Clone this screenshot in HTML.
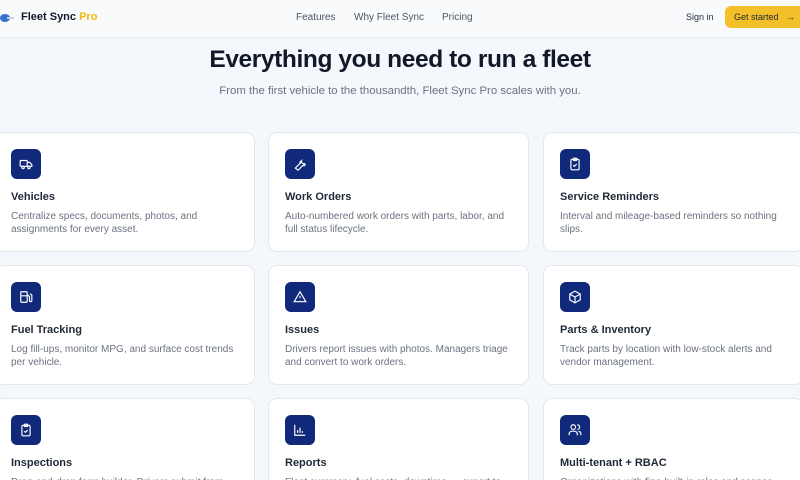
<!DOCTYPE html>
<html><head><style>
*{margin:0;padding:0;box-sizing:border-box}
html,body{width:800px;height:480px;overflow:hidden}
body{background:#f4f7fb;font-family:"Liberation Sans",sans-serif;position:relative}
.hdr{position:absolute;left:0;top:0;width:800px;height:38px;background:#f8fafc;border-bottom:1px solid #e5e9f0}
.logo{position:absolute;left:21px;top:11px;font-size:11px;font-weight:bold;color:#111827}
.logo span{color:#f0b90b}
.nav{position:absolute;top:12px;font-size:10px;color:#4b5563}
.btn{position:absolute;left:725px;top:6px;width:84px;height:22px;background:#f4c02a;border-radius:6px;font-size:9px;color:#1f2937;padding:6px 0 0 9px}
h1{position:absolute;left:0;width:800px;top:46px;text-align:center;font-size:24.5px;font-weight:bold;color:#111827;letter-spacing:-0.4px}
.sub{position:absolute;left:0;width:800px;top:85px;text-align:center;font-size:11.4px;color:#6b7280}
.card{position:absolute;width:261px;height:120px;background:#fff;border:1px solid #e3e7ee;border-radius:9px}
.ic{position:absolute;left:16px;top:16px;width:30px;height:30px;background:#10297a;border-radius:6px;display:flex;align-items:center;justify-content:center}
.t{position:absolute;left:16px;top:58px;font-size:11px;font-weight:bold;color:#1f2937}
.d{position:absolute;left:16px;top:77px;width:226px;font-size:10px;line-height:13px;color:#6b7280}
</style></head><body>
<div class="hdr">
<svg style="position:absolute;left:0;top:13px" width="14" height="10"><ellipse cx="5" cy="5" rx="5" ry="4" fill="#3b6fd0"/><rect x="7" y="4" width="7" height="2" fill="#c9d2e0"/></svg>
<div class="logo">Fleet Sync <span>Pro</span></div>
<div class="nav" style="left:296px">Features</div>
<div class="nav" style="left:354px">Why Fleet Sync</div>
<div class="nav" style="left:442px">Pricing</div>
<div class="nav" style="left:686px;color:#1f2937;font-size:9px;top:12px">Sign in</div>
<div class="btn">Get started &nbsp;&nbsp;→</div>
</div>
<h1>Everything you need to run a fleet</h1>
<div class="sub">From the first vehicle to the thousandth, Fleet Sync Pro scales with you.</div>

<div class="card" style="left:-6px;top:132px"><div class="ic"><svg width="14" height="14" viewBox="0 0 24 24" fill="none" stroke="#fff" stroke-width="2"><rect x="2" y="6" width="12" height="10" rx="1"/><path d="M14 9h4l4 4v3h-8"/><circle cx="7" cy="18" r="2"/><circle cx="17" cy="18" r="2"/></svg></div><div class="t">Vehicles</div><div class="d">Centralize specs, documents, photos, and assignments for every asset.</div></div>
<div class="card" style="left:268px;top:132px"><div class="ic"><svg width="14" height="14" viewBox="0 0 24 24" fill="none" stroke="#fff" stroke-width="2"><path d="M14.7 6.3a4 4 0 0 0 5 5L21 13l-2 2-1.3-1.3-9 9L4 19l9-9L11.7 8.7l3-2.4z"/></svg></div><div class="t">Work Orders</div><div class="d">Auto-numbered work orders with parts, labor, and full status lifecycle.</div></div>
<div class="card" style="left:543px;top:132px"><div class="ic"><svg width="14" height="14" viewBox="0 0 24 24" fill="none" stroke="#fff" stroke-width="2"><rect x="5" y="4" width="14" height="18" rx="2"/><rect x="9" y="2" width="6" height="4" rx="1"/><path d="M9 14l2 2 4-4"/></svg></div><div class="t">Service Reminders</div><div class="d">Interval and mileage-based reminders so nothing slips.</div></div>

<div class="card" style="left:-6px;top:265px"><div class="ic"><svg width="14" height="14" viewBox="0 0 24 24" fill="none" stroke="#fff" stroke-width="2"><rect x="3" y="3" width="11" height="18" rx="1"/><path d="M3 10h11M14 8l4 3v7a2 2 0 0 0 4 0V9l-3-3"/></svg></div><div class="t">Fuel Tracking</div><div class="d">Log fill-ups, monitor MPG, and surface cost trends per vehicle.</div></div>
<div class="card" style="left:268px;top:265px"><div class="ic"><svg width="14" height="14" viewBox="0 0 24 24" fill="none" stroke="#fff" stroke-width="2"><path d="M12 3L2 20h20L12 3zM12 10v4M12 17v.5"/></svg></div><div class="t">Issues</div><div class="d">Drivers report issues with photos. Managers triage and convert to work orders.</div></div>
<div class="card" style="left:543px;top:265px"><div class="ic"><svg width="14" height="14" viewBox="0 0 24 24" fill="none" stroke="#fff" stroke-width="2"><path d="M12 2l9 5v10l-9 5-9-5V7zM3 7l9 5 9-5M12 12v10"/></svg></div><div class="t">Parts &amp; Inventory</div><div class="d">Track parts by location with low-stock alerts and vendor management.</div></div>

<div class="card" style="left:-6px;top:398px"><div class="ic"><svg width="14" height="14" viewBox="0 0 24 24" fill="none" stroke="#fff" stroke-width="2"><rect x="5" y="4" width="14" height="18" rx="2"/><rect x="9" y="2" width="6" height="4" rx="1"/><path d="M9 14l2 2 4-4"/></svg></div><div class="t">Inspections</div><div class="d">Drag-and-drop form builder. Drivers submit from any device.</div></div>
<div class="card" style="left:268px;top:398px"><div class="ic"><svg width="14" height="14" viewBox="0 0 24 24" fill="none" stroke="#fff" stroke-width="2"><path d="M3 3v18h18M8 17v-5M12 17V8M16 17v-3"/></svg></div><div class="t">Reports</div><div class="d">Fleet summary, fuel costs, downtime — export to CSV.</div></div>
<div class="card" style="left:543px;top:398px"><div class="ic"><svg width="14" height="14" viewBox="0 0 24 24" fill="none" stroke="#fff" stroke-width="2"><circle cx="9" cy="7" r="4"/><path d="M2 21v-2a5 5 0 0 1 5-5h4a5 5 0 0 1 5 5v2M16 3a4 4 0 0 1 0 8M22 21v-2a5 5 0 0 0-4-5"/></svg></div><div class="t">Multi-tenant + RBAC</div><div class="d">Organizations with fine-built-in roles and scopes.</div></div>
</body></html>
